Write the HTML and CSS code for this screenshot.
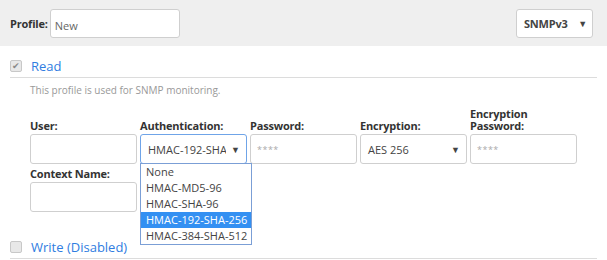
FILE: index.html
```html
<!DOCTYPE html>
<html lang="en">
<head>
    <meta charset="UTF-8">
    <title>SNMP Profile</title>
    <link rel="stylesheet" href="styles.css">
</head>
<body>
    <div class="header">
        <div class="profile">
            <span class="profile-label">Profile:</span>
            <div class="text-box profile-input">New</div>
        </div>
        <div class="select-box version-select">
            <span>SNMPv3</span>
            <span class="arrow">&#9660;</span>
        </div>
    </div>

    <!-- Read section -->
    <div class="section-title">
        <span class="check checked">&#10004;</span>
        <span class="section-name">Read</span>
    </div>
    <p class="description">This profile is used for SNMP monitoring.</p>

    <div class="fields">
        <div class="field">
            <label>User:</label>
            <div class="text-box"></div>
        </div>
        <div class="field auth-field">
            <label>Authentication:</label>
            <div class="select-box focused">
                <span class="clip">HMAC-192-SHA-256</span>
                <span class="arrow">&#9660;</span>
            </div>
            <ul class="dropdown">
                <li>None</li>
                <li>HMAC-MD5-96</li>
                <li>HMAC-SHA-96</li>
                <li class="selected">HMAC-192-SHA-256</li>
                <li>HMAC-384-SHA-512</li>
            </ul>
        </div>
        <div class="field">
            <label>Password:</label>
            <div class="text-box placeholder">****</div>
        </div>
        <div class="field">
            <label>Encryption:</label>
            <div class="select-box">
                <span>AES 256</span>
                <span class="arrow">&#9660;</span>
            </div>
        </div>
        <div class="field">
            <label>Encryption<br>Password:</label>
            <div class="text-box placeholder">****</div>
        </div>
        <div class="field">
            <label>Context Name:</label>
            <div class="text-box"></div>
        </div>
    </div>

    <!-- Write section -->
    <div class="section-title write-title">
        <span class="check"></span>
        <span class="section-name">Write (Disabled)</span>
    </div>
</body>
</html>
```
FILE: styles.css
```css
html, body {
    margin: 0;
    padding: 0;
}

body {
    font-family: "Open Sans", "Noto Sans", sans-serif;
    font-size: 12px;
    color: #333;
    background: #fff;
    overflow: hidden;
}

.header {
    height: 46px;
    background-color: #efefef;
    display: flex;
    align-items: center;
    justify-content: space-between;
    padding: 0 14px 0 10px;
    box-sizing: border-box;
}

.profile {
    display: flex;
    align-items: center;
}

.profile-label {
    font-weight: bold;
    font-size: 11px;
    margin-right: 2px;
    letter-spacing: -0.2px;
}

.text-box {
    width: 107px;
    height: 30px;
    box-sizing: border-box;
    background: #fff;
    border: 1px solid #cfcfcf;
    border-radius: 3px;
    padding: 0 6px;
    display: flex;
    align-items: center;
    font-size: 11px;
    color: #555;
}

.profile-input {
    width: 130px;
    height: 29px;
    padding: 4px 4px 0;
    color: #666;
}

.placeholder {
    color: #aaa;
    font-size: 9px;
    letter-spacing: 0.5px;
    padding-top: 1px;
}

.select-box {
    width: 107px;
    height: 30px;
    box-sizing: border-box;
    background: #fff;
    border: 1px solid #cfcfcf;
    border-radius: 3px;
    padding: 0 6px 0 7px;
    display: flex;
    align-items: center;
    justify-content: space-between;
    font-size: 11px;
    color: #444;
}

.select-box .arrow {
    font-size: 9px;
    color: #444;
    flex: none;
}

.select-box .clip {
    overflow: hidden;
    white-space: nowrap;
    width: 78px;
}

.select-box.focused {
    border-color: #6fa4e8;
}

.version-select {
    width: 77px;
    height: 29px;
    font-weight: bold;
    padding: 0 5px 0 7px;
    letter-spacing: -0.2px;
}

.section-title {
    display: flex;
    align-items: center;
    margin: 0 10px;
    padding: 12px 0 3px;
    border-bottom: 1px solid #dcdcdc;
}

.check {
    width: 10px;
    height: 10px;
    border: 1px solid #c8c8c8;
    border-radius: 2px;
    background: #e8e8e8;
    color: #8a8a8a;
    font-size: 9px;
    line-height: 10px;
    text-align: center;
    margin-right: 9px;
}

.section-name {
    font-size: 13px;
    color: #2f7de1;
    line-height: 16px;
}

.description {
    margin: 5px 0 0 30px;
    font-size: 10px;
    color: #999;
}

.fields {
    display: grid;
    grid-template-columns: repeat(5, 107px);
    column-gap: 3px;
    row-gap: 4px;
    margin: 11px 0 0 30px;
    align-items: end;
}

.field {
    display: flex;
    flex-direction: column;
    justify-content: flex-end;
}

.field label {
    font-weight: bold;
    font-size: 11px;
    line-height: 12px;
    margin-bottom: 2px;
    letter-spacing: -0.2px;
}

.auth-field {
    position: relative;
}

.dropdown {
    position: absolute;
    top: 100%;
    left: 0;
    margin: -1px 0 0;
    padding: 0;
    list-style: none;
    background: #fff;
    border: 1px solid #7b9fd6;
    width: 112px;
    box-sizing: border-box;
    z-index: 10;
}

.dropdown li {
    height: 16px;
    line-height: 16px;
    padding-left: 5px;
    font-size: 11px;
    color: #444;
    white-space: nowrap;
}

.dropdown li.selected {
    background-color: #3390f2;
    color: #fff;
}

.write-title {
    margin-top: 27px;
    padding-top: 0;
    padding-bottom: 3px;
}
```
